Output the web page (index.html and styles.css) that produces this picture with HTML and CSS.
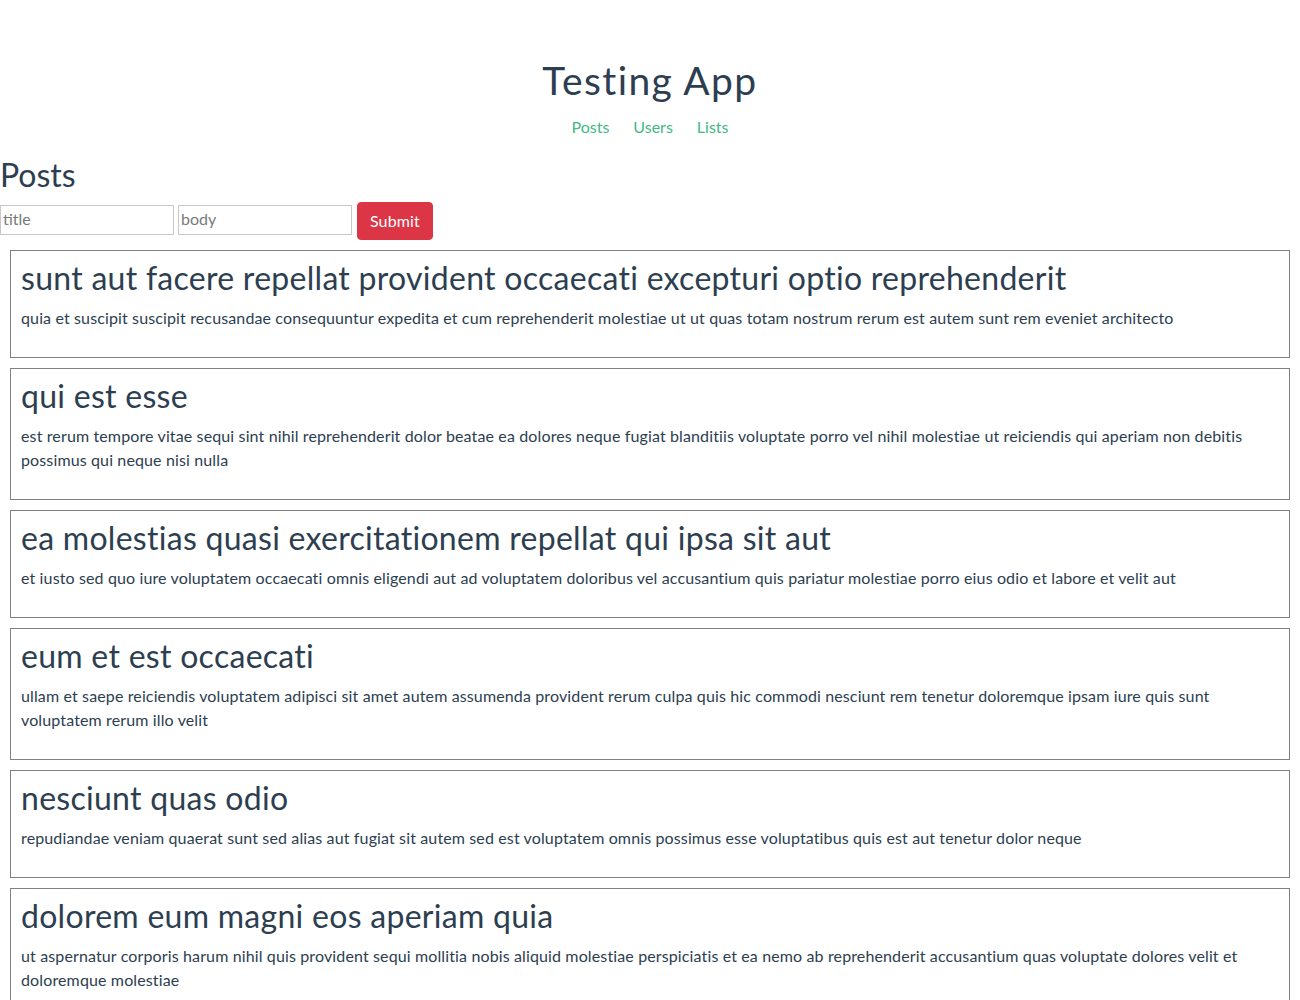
FILE: index.html
```html
<!DOCTYPE html>
<html lang="en">
<head>
<meta charset="utf-8">
<title>Testing App</title>
<link rel="stylesheet" href="styles.css">
</head>
<body>
<div class="app">
  <header class="header">
    <h1 class="app-title">Testing App</h1>
    <nav class="nav">
      <a class="nav-link" href="#">Posts</a>
      <a class="nav-link" href="#">Users</a>
      <a class="nav-link" href="#">Lists</a>
    </nav>
  </header>
  <main>
    <h2 class="page-title">Posts</h2>
    <form class="post-form">
      <input class="field" type="text" placeholder="title">
      <input class="field" type="text" placeholder="body">
      <button class="btn-submit" type="button">Submit</button>
    </form>
    <div class="posts">
      <div class="post">
        <h3 class="post-title">sunt aut facere repellat provident occaecati excepturi optio reprehenderit</h3>
        <p class="post-body">quia et suscipit suscipit recusandae consequuntur expedita et cum reprehenderit molestiae ut ut quas totam nostrum rerum est autem sunt rem eveniet architecto</p>
      </div>
      <div class="post">
        <h3 class="post-title">qui est esse</h3>
        <p class="post-body">est rerum tempore vitae sequi sint nihil reprehenderit dolor beatae ea dolores neque fugiat blanditiis voluptate porro vel nihil molestiae ut reiciendis qui aperiam non debitis possimus qui neque nisi nulla</p>
      </div>
      <div class="post">
        <h3 class="post-title">ea molestias quasi exercitationem repellat qui ipsa sit aut</h3>
        <p class="post-body">et iusto sed quo iure voluptatem occaecati omnis eligendi aut ad voluptatem doloribus vel accusantium quis pariatur molestiae porro eius odio et labore et velit aut</p>
      </div>
      <div class="post">
        <h3 class="post-title">eum et est occaecati</h3>
        <p class="post-body">ullam et saepe reiciendis voluptatem adipisci sit amet autem assumenda provident rerum culpa quis hic commodi nesciunt rem tenetur doloremque ipsam iure quis sunt voluptatem rerum illo velit</p>
      </div>
      <div class="post">
        <h3 class="post-title">nesciunt quas odio</h3>
        <p class="post-body">repudiandae veniam quaerat sunt sed alias aut fugiat sit autem sed est voluptatem omnis possimus esse voluptatibus quis est aut tenetur dolor neque</p>
      </div>
      <div class="post">
        <h3 class="post-title">dolorem eum magni eos aperiam quia</h3>
        <p class="post-body">ut aspernatur corporis harum nihil quis provident sequi mollitia nobis aliquid molestiae perspiciatis et ea nemo ab reprehenderit accusantium quas voluptate dolores velit et doloremque molestiae</p>
      </div>
    </div>
  </main>
</div>
</body>
</html>
```
FILE: styles.css
```css
* { box-sizing: border-box; }

html, body {
  margin: 0;
  padding: 0;
  background: #ffffff;
}

body {
  font-family: Lato, "Noto Sans", "Liberation Sans", sans-serif;
  font-size: 16px;
  line-height: 24px;
  color: #2c3e50;
}

.header {
  padding-top: 58px;
  text-align: center;
}

.app-title {
  margin: 0;
  font-size: 39px;
  line-height: 44px;
  letter-spacing: 1.4px;
  font-weight: 400;
}

.nav {
  margin-top: 13px;
  display: flex;
  justify-content: center;
  gap: 24px;
}

.nav-link {
  color: #42b983;
  text-decoration: none;
  font-size: 16px;
  line-height: 24px;
}

.page-title {
  margin: 17px 0 0;
  font-size: 32px;
  line-height: 38px;
  font-weight: 400;
}

.post-form {
  margin-top: 8px;
  display: flex;
  align-items: flex-start;
  height: 38px;
}

.field {
  width: 174px;
  height: 30px;
  margin: 3px 4px 0 0;
  padding: 0 2px 3px;
  border: 1px solid #c8c8c8;
  border-radius: 0;
  font-family: inherit;
  font-size: 16px;
  color: #2c3e50;
  background: #fff;
}

.field::placeholder {
  color: #7a7a7a;
}

.btn-submit {
  margin-left: 1px;
  height: 38px;
  padding: 0 12px;
  border: 1px solid #dc3545;
  border-radius: 4px;
  background: #dc3545;
  color: #fff;
  font-family: inherit;
  font-size: 16px;
  line-height: 24px;
  letter-spacing: 0.1px;
  cursor: pointer;
}

.posts {
  margin-top: 10px;
  display: flex;
  flex-direction: column;
  gap: 10px;
  padding: 0 10px;
}

.post {
  border: 1px solid #808080;
  padding: 8px 10px 10px;
}

.post-title {
  margin: 0;
  font-size: 32px;
  line-height: 38px;
  letter-spacing: 0.28px;
  font-weight: 400;
}

.post-body {
  margin: 9px 0 17px;
  font-size: 16px;
  line-height: 24px;
  letter-spacing: 0.13px;
}
```
